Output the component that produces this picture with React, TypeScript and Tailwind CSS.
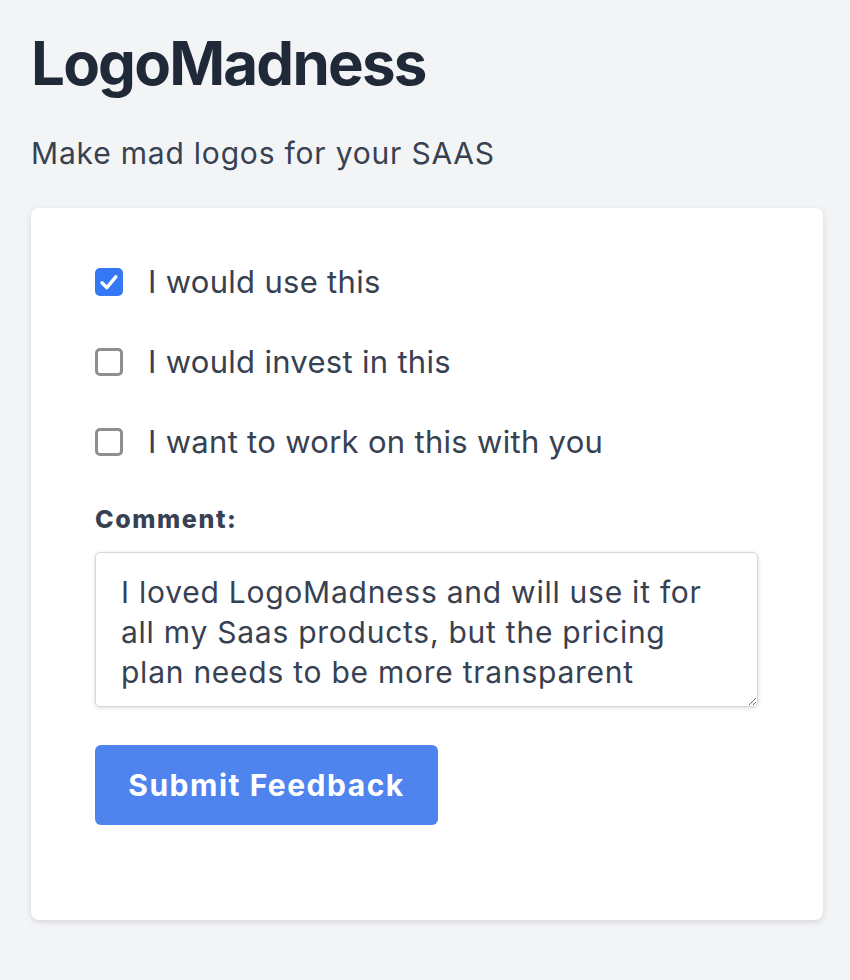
import React from "react";

function Box({ checked }: { checked: boolean }) {
  if (checked) {
    return (
      <span className="flex h-[28px] w-[28px] shrink-0 items-center justify-center rounded-[5px] bg-[#3478f6]">
        <svg width="28" height="28" viewBox="0 0 28 28" fill="none">
          <path d="M7 14.8 L11.8 19.6 L20.8 8.8" stroke="white" strokeWidth="3.4" strokeLinecap="round" strokeLinejoin="round" />
        </svg>
      </span>
    );
  }
  return <span className="h-[28px] w-[28px] shrink-0 rounded-[5px] border-[3px] border-[#8e8e93] bg-white" />;
}

export default function App() {
  const items = [
    { label: "I would use this", checked: true },
    { label: "I would invest in this", checked: false },
    { label: "I want to work on this with you", checked: false },
  ];
  return (
    <div className="min-h-screen bg-[#f3f4f6] pl-[31px] pt-[27px] pb-[40px]" style={{ fontFamily: "Inter, 'Noto Sans', sans-serif" }}>
      <h1 className="text-[60px] font-bold leading-[72px] tracking-[-1.8px] text-[#1f2937]">LogoMadness</h1>
      <p className="mt-[30px] text-[30px] leading-[48px] tracking-[0.8px] text-[#374151]">Make mad logos for your SAAS</p>
      <div className="mt-[31px] w-[792px] rounded-[8px] bg-white pl-[64px] pt-[54px] pb-[95px] shadow-[0_2px_6px_rgba(0,0,0,0.12)]">
        <div className="flex flex-col gap-[40px]">
          {items.map((it) => (
            <label key={it.label} className="flex h-[40px] items-center gap-[25px]">
              <Box checked={it.checked} />
              <span className="text-[31px] leading-[40px] tracking-[0.3px] text-[#374151]">{it.label}</span>
            </label>
          ))}
        </div>
        <div className="mt-[41px] text-[25px] font-extrabold leading-[32px] tracking-[1.6px] text-[#374151]">Comment:</div>
        <textarea
          className="mt-[17px] block h-[155px] w-[663px] resize-y rounded-[5px] border border-[#d6d6d9] pl-[25px] pr-[20px] pt-[19px] text-[30px] leading-[40px] tracking-[0.75px] text-[#374151] shadow-[0_1px_4px_rgba(0,0,0,0.14)] outline-none"
          style={{ fontFamily: "Inter, 'Noto Sans', sans-serif" }}
          defaultValue="I loved LogoMadness and will use it for all my Saas products, but the pricing plan needs to be more transparent"
        />
        <button className="mt-[38px] flex h-[80px] w-[343px] items-center justify-center rounded-[6px] bg-[#4f84ee] text-[30px] font-bold tracking-[1.5px] text-white">
          Submit Feedback
        </button>
      </div>
    </div>
  );
}
